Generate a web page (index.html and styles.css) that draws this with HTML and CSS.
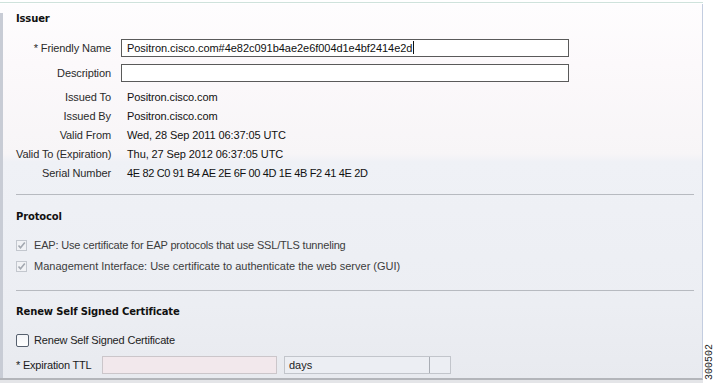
FILE: index.html
```html
<!DOCTYPE html>
<html>
<head>
<meta charset="utf-8">
<link rel="stylesheet" href="styles.css">
</head>
<body>
<div class="page">
  <div class="topline"></div>
  <div class="panel">
    <h3 class="heading heading-first">Issuer</h3>
    <div class="form-grid">
      <label class="lbl">* Friendly Name</label>
      <div class="input input-name">Positron.cisco.com#4e82c091b4ae2e6f004d1e4bf2414e2d<span class="caret"></span></div>
      <label class="lbl">Description</label>
      <div class="input"></div>
    </div>
    <div class="info-grid">
      <span class="lbl">Issued To</span><span class="val">Positron.cisco.com</span>
      <span class="lbl">Issued By</span><span class="val">Positron.cisco.com</span>
      <span class="lbl">Valid From</span><span class="val">Wed, 28 Sep 2011 06:37:05 UTC</span>
      <span class="lbl">Valid To (Expiration)</span><span class="val">Thu, 27 Sep 2012 06:37:05 UTC</span>
      <span class="lbl">Serial Number</span><span class="val serial">4E 82 C0 91 B4 AE 2E 6F 00 4D 1E 4B F2 41 4E 2D</span>
    </div>
    <div class="divider divider-1"></div>
    <h3 class="heading">Protocol</h3>
    <div class="check-row check-row-first">
      <span class="cb cb-disabled"><svg width="9" height="9" viewBox="0 0 9 9"><path d="M1.5 4.5 L3.5 6.8 L7.8 1.6" fill="none" stroke="#a3a8b0" stroke-width="1.6"/></svg></span>
      <span class="check-text tight">EAP: Use certificate for EAP protocols that use SSL/TLS tunneling</span>
    </div>
    <div class="check-row check-row-second">
      <span class="cb cb-disabled"><svg width="9" height="9" viewBox="0 0 9 9"><path d="M1.5 4.5 L3.5 6.8 L7.8 1.6" fill="none" stroke="#a3a8b0" stroke-width="1.6"/></svg></span>
      <span class="check-text">Management Interface: Use certificate to authenticate the web server (GUI)</span>
    </div>
    <div class="divider divider-2"></div>
    <h3 class="heading">Renew Self Signed Certificate</h3>
    <div class="check-row renew-row">
      <span class="cb cb-empty"></span>
      <span class="check-text dark tight">Renew Self Signed Certificate</span>
    </div>
    <div class="ttl-row">
      <span class="ttl-label">* Expiration TTL</span>
      <span class="ttl-input"></span>
      <span class="select"><span class="select-text">days</span><span class="select-btn"></span></span>
    </div>
  </div>
  <div class="below"></div>
  <div class="figno">300502</div>
</div>
</body>
</html>
```

FILE: styles.css
```css
html, body {
  margin: 0;
  padding: 0;
  background: #ffffff;
}
.page {
  position: relative;
  width: 717px;
  height: 383px;
  overflow: hidden;
  font-family: "Liberation Sans", Arial, sans-serif;
  font-size: 11px;
  color: #1a1a1a;
}
.topline {
  margin-top: 2px;
  width: 703px;
  height: 1px;
  background: #cfe2dc;
}
.panel {
  box-sizing: border-box;
  width: 703px;
  height: 376px;
  margin-top: 1px;
  padding: 8px 8px 0 16px;
  border-right: 1px solid #c3cde0;
  border-bottom: 2px solid #b3b5ba;
  background:
    linear-gradient(#c8ccd5, #c8ccd5) no-repeat 0 9px / 3px 100%,
    linear-gradient(to bottom, #fefdfe 0px, #fcf9fb 60px, #f7f5f7 150px, #eff1f6 158px, #eceef3 300px, #e8eaef 100%);
}
.heading {
  margin: 0;
  height: 14px;
  line-height: 14px;
  font-family: "DejaVu Sans", Tahoma, sans-serif;
  font-weight: bold;
  font-size: 10px;
  letter-spacing: -0.15px;
  color: #111;
}
.form-grid {
  margin-top: 13px;
  display: grid;
  grid-template-columns: 95px 448px;
  column-gap: 10px;
  row-gap: 7px;
  align-items: center;
}
.lbl {
  text-align: right;
  color: #2a2a2a;
  white-space: nowrap;
  letter-spacing: -0.1px;
}
.input {
  box-sizing: border-box;
  height: 18px;
  border: 1px solid #5a5a5a;
  background: #ffffff;
  padding-left: 5px;
  line-height: 16px;
  color: #111;
  white-space: nowrap;
  overflow: hidden;
  letter-spacing: -0.04px;
}
.caret {
  display: inline-block;
  width: 1px;
  height: 13px;
  background: #111;
  vertical-align: -2px;
  margin-left: 1px;
}
.info-grid {
  margin-top: 5px;
  display: grid;
  grid-template-columns: 95px 448px;
  column-gap: 10px;
  grid-auto-rows: 19px;
  align-items: center;
}
.val {
  padding-left: 6px;
  color: #111;
  white-space: nowrap;
  letter-spacing: -0.1px;
}
.val.serial {
  letter-spacing: -0.36px;
}
.divider {
  height: 1px;
  width: 678px;
  background: #b7bac0;
}
.divider-1 {
  margin-top: 12px;
  margin-bottom: 15px;
}
.divider-2 {
  margin-top: 16px;
  margin-bottom: 14px;
}
.check-row {
  display: flex;
  align-items: center;
  height: 16px;
  gap: 7px;
}
.check-row-first {
  margin-top: 13px;
}
.check-row-second {
  margin-top: 5px;
}
.cb {
  box-sizing: border-box;
  display: flex;
  align-items: center;
  justify-content: center;
  flex: none;
}
.cb-disabled {
  width: 11px;
  height: 11px;
  border: 1px solid #c3c7ce;
  background: #f1f2f5;
}
.cb-empty {
  width: 13px;
  height: 13px;
  border: 1px solid #56606e;
  border-radius: 2px;
  background: linear-gradient(to bottom, #f4f5f8, #ffffff);
  margin-right: -2px;
}
.check-text {
  color: #3c3c3c;
  white-space: nowrap;
}
.check-text.tight {
  letter-spacing: -0.18px;
}
.check-text.dark {
  color: #222;
}
.renew-row {
  margin-top: 13px;
}
.ttl-row {
  margin-top: 8px;
  display: flex;
  align-items: center;
  height: 18px;
}
.ttl-label {
  width: 86px;
  color: #1a1a1a;
  white-space: nowrap;
  letter-spacing: -0.2px;
}
.ttl-input {
  box-sizing: border-box;
  width: 175px;
  height: 18px;
  border: 1px solid #cbc6ca;
  background: #f2e8ec;
}
.select {
  box-sizing: border-box;
  margin-left: 7px;
  width: 167px;
  height: 18px;
  border: 1px solid #c2c5cb;
  background: #eceef3;
  display: flex;
}
.select-text {
  flex: 1;
  padding-left: 4px;
  line-height: 16px;
  color: #222;
}
.select-btn {
  width: 20px;
  border-left: 1px solid #a9adb4;
}
.below {
  height: 4px;
  width: 703px;
  background: #e4e5e8;
}
.figno {
  position: absolute;
  left: 704px;
  top: 344px;
  font-family: "Liberation Mono", monospace;
  font-size: 10px;
  line-height: 12px;
  color: #222;
  writing-mode: vertical-rl;
  transform: rotate(180deg);
}
```
